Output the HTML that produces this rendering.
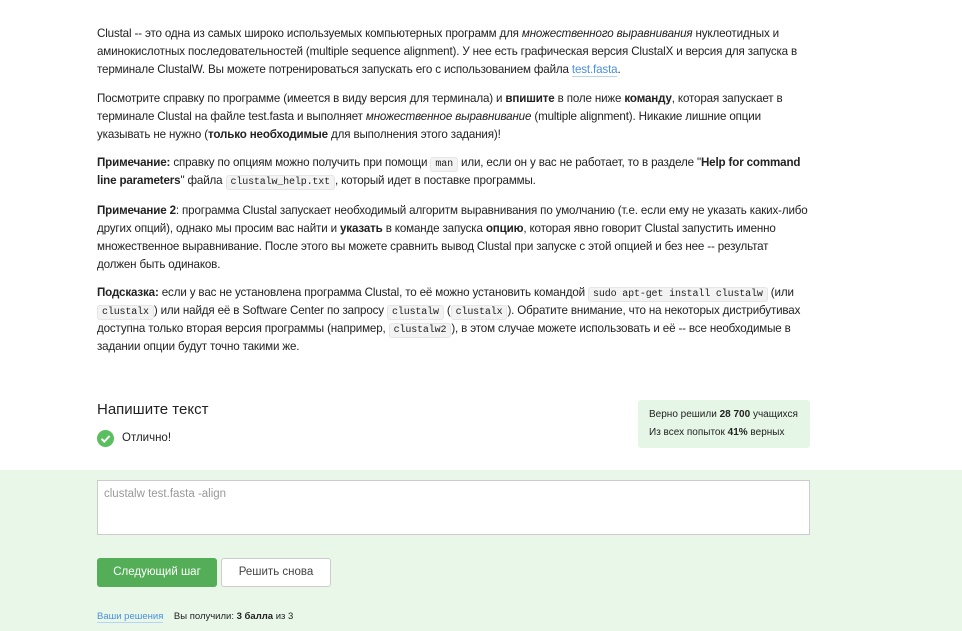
<!DOCTYPE html>
<html><head><meta charset="utf-8"><style>
body{margin:0;width:962px;height:631px;background:#fff;font-family:"Liberation Sans",Arial,sans-serif;color:#222;position:relative;overflow:hidden}
.l{position:absolute;left:97px;font-size:11.6px;white-space:nowrap;line-height:16px;letter-spacing:-0.15px;margin-top:1px}
code{font-family:"Liberation Mono",monospace;font-size:10px;background:#f3f3f3;border:1px solid #e6e6e6;border-radius:3px;padding:1px 4px}
a{color:#4a8fe0;text-decoration:none;border-bottom:1px solid #b8d3f3}
.green{position:absolute;left:0;top:470px;width:962px;height:161px;background:#e9f7e9}
</style></head><body>
<div class="l" style="top:25px">Clustal -- это одна из самых широко используемых компьютерных программ для <i>множественного выравнивания</i> нуклеотидных и</div>
<div class="l" style="top:43px">аминокислотных последовательностей (multiple sequence alignment). У нее есть графическая версия ClustalX и версия для запуска в</div>
<div class="l" style="top:61px">терминале ClustalW. Вы можете потренироваться запускать его с использованием файла <a>test.fasta</a>.</div>
<div class="l" style="top:90px">Посмотрите справку по программе (имеется в виду версия для терминала) и <b>впишите</b> в поле ниже <b>команду</b>, которая запускает в</div>
<div class="l" style="top:108px">терминале Clustal на файле test.fasta и выполняет <i>множественное выравнивание</i> (multiple alignment). Никакие лишние опции</div>
<div class="l" style="top:126px">указывать не нужно (<b>только необходимые</b> для выполнения этого задания)!</div>
<div class="l" style="top:154px"><b>Примечание:</b> справку по опциям можно получить при помощи <code>man</code> или, если он у вас не работает, то в разделе "<b>Help for command</b></div>
<div class="l" style="top:172px"><b>line parameters</b>" файла <code>clustalw_help.txt</code>, который идет в поставке программы.</div>
<div class="l" style="top:202px"><b>Примечание 2</b>: программа Clustal запускает необходимый алгоритм выравнивания по умолчанию (т.е. если ему не указать каких-либо</div>
<div class="l" style="top:220px">других опций), однако мы просим вас найти и <b>указать</b> в команде запуска <b>опцию</b>, которая явно говорит Clustal запустить именно</div>
<div class="l" style="top:238px">множественное выравнивание. После этого вы можете сравнить вывод Clustal при запуске с этой опцией и без нее -- результат</div>
<div class="l" style="top:256px">должен быть одинаков.</div>
<div class="l" style="top:284px"><b>Подсказка:</b> если у вас не установлена программа Clustal, то её можно установить командой <code>sudo apt-get install clustalw</code> (или</div>
<div class="l" style="top:302px"><code>clustalx</code>) или найдя её в Software Center по запросу <code>clustalw</code> (<code>clustalx</code>). Обратите внимание, что на некоторых дистрибутивах</div>
<div class="l" style="top:320px">доступна только вторая версия программы (например, <code>clustalw2</code>), в этом случае можете использовать и её -- все необходимые в</div>
<div class="l" style="top:338px">задании опции будут точно такими же.</div>
<div style="position:absolute;left:97px;top:401px;font-size:15px;color:#222">Напишите текст</div>
<svg style="position:absolute;left:97px;top:430px" width="17" height="17" viewBox="0 0 17 17"><circle cx="8.5" cy="8.5" r="8.5" fill="#5cbf5f"/><path d="M4.5 8.8l2.8 2.8 5.3-5.6" stroke="#fff" stroke-width="2" fill="none"/></svg>
<div style="position:absolute;left:122px;top:432px;font-size:11.5px">Отлично!</div>
<div style="position:absolute;left:638px;top:400px;width:172px;height:48px;background:#e6f6e6;border-radius:3px;font-size:10px;line-height:18px;box-sizing:border-box;padding:6px 0 0 11px">Верно решили <b>28 700</b> учащихся<br>Из всех попыток <b>41%</b> верных</div>
<div class="green"></div>
<div style="position:absolute;left:97px;top:480px;width:713px;height:55px;background:#fff;border:1px solid #ccc;box-sizing:border-box;font-size:11.5px;color:#999;padding:7px 6px">clustalw test.fasta -align</div>
<div style="position:absolute;left:97px;top:558px;width:120px;height:29px;background:#54ad57;border-radius:3px;color:#fff;font-size:11.5px;text-align:center;line-height:29px">Следующий шаг</div>
<div style="position:absolute;left:221px;top:558px;width:110px;height:29px;background:#fff;border:1px solid #ccc;box-sizing:border-box;border-radius:3px;color:#444;font-size:11.5px;text-align:center;line-height:27px">Решить снова</div>
<div style="position:absolute;left:97px;top:611px;font-size:9.5px;white-space:nowrap"><a>Ваши решения</a>&nbsp;&nbsp;&nbsp; Вы получили: <b>3 балла</b> из 3</div>
</body></html>
